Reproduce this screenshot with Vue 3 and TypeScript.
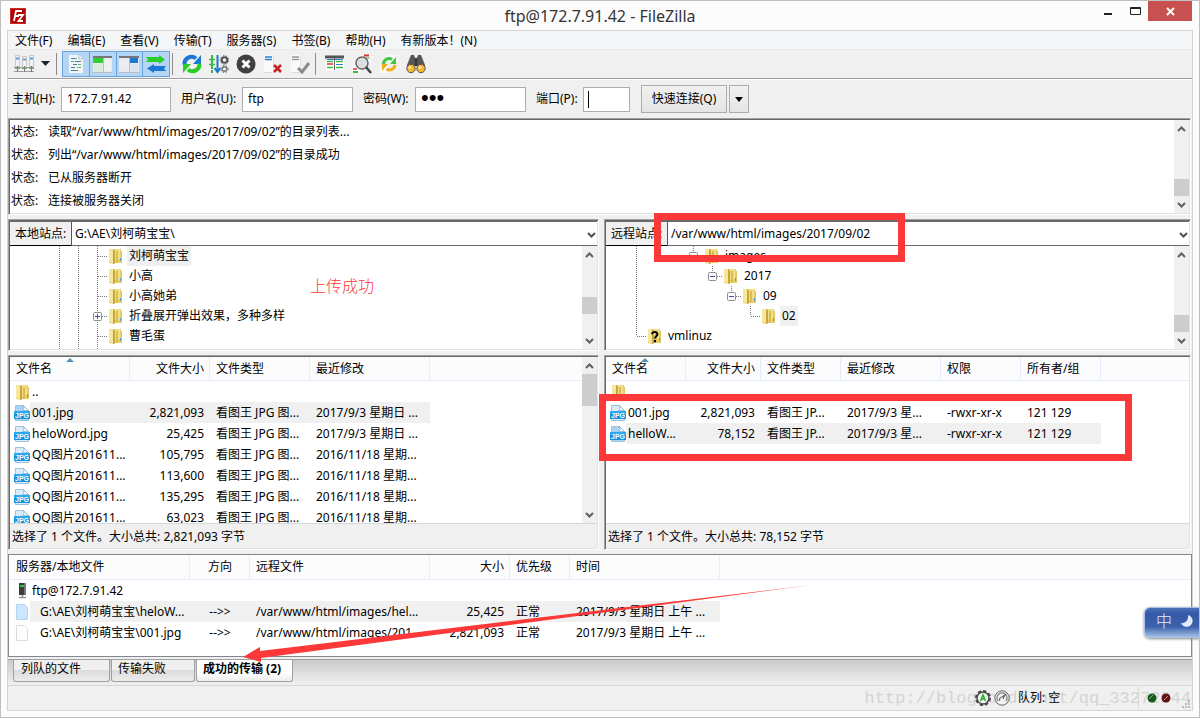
<script setup lang="ts">
import { defineComponent, h, ref } from 'vue'

type Cell = 'blank' | 'line' | 'tee' | 'plus' | 'minus' | 'elbow'
interface TreeNode { cells: Cell[]; label: string; selected?: boolean; unknown?: boolean }
interface FileRow { name: string; cols: string[]; selected?: boolean }

const menus = ['文件(F)', '编辑(E)', '查看(V)', '传输(T)', '服务器(S)', '书签(B)', '帮助(H)', '有新版本！(N)']

const log = [
  '读取“/var/www/html/images/2017/09/02”的目录列表...',
  '列出“/var/www/html/images/2017/09/02”的目录成功',
  '已从服务器断开',
  '连接被服务器关闭',
]

const localTree: TreeNode[] = [
  { cells: ['line', 'line', 'tee'], label: '刘柯萌宝宝', selected: true },
  { cells: ['line', 'line', 'tee'], label: '小高' },
  { cells: ['line', 'line', 'tee'], label: '小高她弟' },
  { cells: ['line', 'line', 'plus'], label: '折叠展开弹出效果，多种多样' },
  { cells: ['line', 'line', 'tee'], label: '曹毛蛋' },
  { cells: ['line', 'line', 'tee'], label: '' },
]
const remoteTree: TreeNode[] = [
  { cells: ['line', 'blank', 'blank', 'minus'], label: 'images' },
  { cells: ['line', 'blank', 'blank', 'blank', 'minus'], label: '2017' },
  { cells: ['line', 'blank', 'blank', 'blank', 'blank', 'minus'], label: '09' },
  { cells: ['line', 'blank', 'blank', 'blank', 'blank', 'blank', 'elbow'], label: '02', selected: true },
  { cells: ['elbow'], label: 'vmlinuz', unknown: true },
]

const localFiles: FileRow[] = [
  { name: '001.jpg', cols: ['2,821,093', '看图王 JPG 图...', '2017/9/3 星期日 ...'], selected: true },
  { name: 'heloWord.jpg', cols: ['25,425', '看图王 JPG 图...', '2017/9/3 星期日 ...'] },
  { name: 'QQ图片201611...', cols: ['105,795', '看图王 JPG 图...', '2016/11/18 星期...'] },
  { name: 'QQ图片201611...', cols: ['113,600', '看图王 JPG 图...', '2016/11/18 星期...'] },
  { name: 'QQ图片201611...', cols: ['135,295', '看图王 JPG 图...', '2016/11/18 星期...'] },
  { name: 'QQ图片201611...', cols: ['63,023', '看图王 JPG 图...', '2016/11/18 星期...'] },
]
const remoteFiles: FileRow[] = [
  { name: '001.jpg', cols: ['2,821,093', '看图王 JP...', '2017/9/3 星...', '-rwxr-xr-x', '121 129'] },
  { name: 'helloW...', cols: ['78,152', '看图王 JP...', '2017/9/3 星...', '-rwxr-xr-x', '121 129'], selected: true },
]
const queueRows = [
  { name: 'G:\\AE\\刘柯萌宝宝\\heloW...', dir: '-->>', remote: '/var/www/html/images/hel...', size: '25,425', pri: '正常', time: '2017/9/3 星期日 上午 ...', selected: true },
  { name: 'G:\\AE\\刘柯萌宝宝\\001.jpg', dir: '-->>', remote: '/var/www/html/images/201...', size: '2,821,093', pri: '正常', time: '2017/9/3 星期日 上午 ...', selected: false },
]

const host = ref('172.7.91.42')
const user = ref('ftp')
const pass = ref('abc')
const port = ref('')

const FolderIcon = defineComponent({
  props: { unknown: Boolean },
  setup: (props) => () =>
    h('svg', { width: 16, height: 16, viewBox: '0 0 16 16', style: { flex: 'none' } }, [
      h('path', { d: 'M2 1h12v14h-6l-1 1-5-1z', fill: '#e8cf6a' }),
      h('path', { d: 'M2 1h4v14l-4-1z', fill: '#f5e79c' }),
      h('path', { d: 'M6 1l2 2v12l-2 1z', fill: '#c9a43c' }),
      h('path', { d: 'M8 1h5v10l-5 1z', fill: '#f2df8c' }),
      h('path', { d: 'M9 3l2 0v11l-2 1z', fill: '#dcbc50' }),
      h('path', { d: 'M14 3l1 0v12l-1 0z', fill: '#dfc566' }),
      h('path', { d: 'M13 10h1v3h-1z', fill: '#4aa3d8' }),
      props.unknown
        ? h('path', { d: 'M6 6.2C6 3.2 11.6 3.2 11.4 6.4c0 1.8-2.4 2-2.4 4M9 12v2.2', fill: 'none', stroke: '#000', 'stroke-width': 2 })
        : null,
    ]),
})

const JpgIcon = defineComponent({
  props: { selected: Boolean },
  setup: (props) => () =>
    h('svg', { width: 16, height: 16, viewBox: '0 0 16 16', style: { flex: 'none' } }, [
      h('path', { d: 'M1.5 .5h8l5 5v10h-13z', fill: props.selected ? '#a9d2f3' : '#dcebf6', stroke: '#9cc3de' }),
      h('path', { d: 'M9.5 .5c1 2 0 4-1 5l6 0z', fill: '#f7fbff', stroke: '#6aaedb', 'stroke-width': 0.7 }),
      h('rect', { x: 0, y: 6, width: 16, height: 8, fill: '#1493e0' }),
      h('rect', { x: 0, y: 6, width: 16, height: 3, fill: '#2ea7ee' }),
      h('text', { x: 8, y: 12.8, 'text-anchor': 'middle', 'font-size': 7, 'font-weight': 700, 'font-family': 'Liberation Sans, sans-serif', fill: '#fff' }, 'JPG'),
    ]),
})

const TreeCell = defineComponent({
  props: { kind: { type: String, required: true } },
  setup: (props) => () => {
    const dots = { stroke: '#777', 'stroke-dasharray': '1 1', 'stroke-width': 1 }
    const k = props.kind
    const parts = []
    if (k === 'line' || k === 'tee' || k === 'plus') parts.push(h('path', { d: 'M9.5 0v20', ...dots }))
    if (k === 'elbow' || k === 'minus') parts.push(h('path', { d: 'M9.5 0v10', ...dots }))
    if (k === 'tee' || k === 'elbow' || k === 'plus' || k === 'minus') parts.push(h('path', { d: 'M10 10.5h10', ...dots }))
    if (k === 'plus' || k === 'minus') {
      parts.push(h('rect', { x: 5.5, y: 6.5, width: 8, height: 8, rx: 1, fill: '#fafafa', stroke: '#8e8e8e' }))
      parts.push(h('path', { d: k === 'plus' ? 'M7 10.5h5M9.5 8v5' : 'M7 10.5h5', stroke: '#3c5aa0' }))
    }
    return h('svg', { width: 19, height: 20, viewBox: '0 0 19 20', fill: 'none', style: { flex: 'none' } }, parts)
  },
})

const ScrollBar = defineComponent({
  props: { before: { type: Number, required: true }, thumb: { type: Number, required: true } },
  setup: (props) => () => {
    const arrow = (d: string) =>
      h('svg', { width: 15, height: 17, viewBox: '0 0 15 17', fill: 'none', style: { flex: 'none' } }, [
        h('path', { d, stroke: '#606060', 'stroke-width': 2 }),
      ])
    return h('div', { class: 'scrollbar' }, [
      arrow('M4 11l3.5-3.5L11 11'),
      h('div', { style: { flex: `${props.before} 1 0` } }),
      h('div', { class: 'thumb', style: { height: `${props.thumb}px` } }),
      h('div', { style: { flex: `${100 - props.before} 1 0` } }),
      arrow('M4 7l3.5 3.5L11 7'),
    ])
  },
})
</script>

<template>
  <div class="window">
    <header class="titlebar">
      <svg class="logo" width="16" height="16" viewBox="0 0 16 16">
        <rect width="16" height="16" fill="#b30000" />
        <rect x=".5" y=".5" width="15" height="15" fill="none" stroke="#d25a5a" stroke-dasharray="1 1" />
        <path d="M4 13L6 3h6M5 8h4M8 7h5l-4.500 6H13" fill="none" stroke="#fff" stroke-width="1.800" />
      </svg>
      <h1>ftp@172.7.91.42 - FileZilla</h1>
      <div class="winbtns">
        <button aria-label="最小化"><svg width="26" height="20"><path d="M12 13h8" stroke="#222" stroke-width="2" /></svg></button>
        <button aria-label="最大化"><svg width="30" height="20"><path d="M12.500 6.500h10v7h-10zM12 7.500h11" fill="none" stroke="#222" /></svg></button>
        <button class="close" aria-label="关闭"><svg width="44" height="20"><path d="M19 7l7 7M26 7l-7 7" stroke="#fff" stroke-width="2" /></svg></button>
      </div>
    </header>

    <div class="client">
      <nav class="menubar">
        <button v-for="m in menus" :key="m">{{ m }}</button>
      </nav>

      <div class="toolbar">
        <button class="tool site" aria-label="站点管理器">
          <svg width="22" height="22" viewBox="0 0 22 22">
            <g fill="#f4f4f4" stroke="#c9c9c9"><rect x="2.500" y="2.500" width="4" height="11" /><rect x="9.500" y="3.500" width="4" height="11" /><rect x="16.500" y="2.500" width="4" height="11" /></g>
            <path d="M3 5.500h3M10 6.500h3M17 5.500h3" stroke="#5c9ad6" stroke-width="2" />
            <path d="M1 14.500h20M1 18.500h20" stroke="#9c9c9c" />
            <path d="M4.500 13v6M11.500 13v6M18.500 13v6" stroke="#777" />
            <path d="M2 15.500h5M9 15.500h5M16 15.500h5" stroke="#69a869" />
          </svg>
        </button>
        <button class="tool drop" aria-label="站点列表"><svg width="9" height="5"><path d="M0 0h9L4.500 5z" fill="#222" /></svg></button>
        <span class="sep"></span>
        <div class="toggles">
          <button class="toggle" aria-label="消息日志">
            <svg width="20" height="20" viewBox="0 0 20 20"><path d="M3 1h10l4 4v14H3z" fill="#f3f6f8" /><path d="M13 1v4h4" fill="none" stroke="#b9c4cc" /><path d="M5 4.500h5M7 10.500h4M5 13.500h4" stroke="#4b7a99" /><path d="M5 7.500h3M11 13.500h4M9 4.500h2" stroke="#58b858" /><path d="M9 7.500h6M5 16.500h7" stroke="#4b7a99" /><path d="M12 10.500h3" stroke="#58b858" /></svg>
          </button>
          <button class="toggle" aria-label="本地目录树">
            <svg width="20" height="20" viewBox="0 0 20 20"><path d="M0 2h19v16H0z" fill="#e6e9ec" /><path d="M0 2h19v2H0z" fill="#777" /><path d="M0 4h10v5H0z" fill="#2fd02f" /><path d="M1 10h8v7H1z" fill="#d8ebd6" /><path d="M11 5h7v12h-7z" fill="#f1f1f1" /><path d="M10.500 4v14M0 18.500h19" stroke="#b9c0c6" /></svg>
          </button>
          <button class="toggle" aria-label="远程目录树">
            <svg width="20" height="20" viewBox="0 0 20 20"><path d="M0 2h20v16H0z" fill="#e6e9ec" /><path d="M0 2h20v2H0z" fill="#777" /><path d="M1 5h9v12H1z" fill="#ececec" /><path d="M11 4h8v5h-8z" fill="#1b78d4" /><path d="M12 10h7v7h-7z" fill="#d6e4f2" /><path d="M10.500 4v14M0 18.500h20" stroke="#b9c0c6" /></svg>
          </button>
          <button class="toggle" aria-label="传输队列">
            <svg width="20" height="20" viewBox="0 0 20 20"><path d="M0 3h13V1l6 4.500-6 4.500V8H0l2-2.500z" fill="#27cf27" /><path d="M20 12H8v-2l-7 4.500L8 19v-2h12l-2-2.500z" fill="#1b78d4" /></svg>
          </button>
        </div>
        <span class="sep tight"></span>
        <button class="tool" aria-label="刷新">
          <svg width="20" height="20" viewBox="0 0 20 20"><path d="M2.500 10.500A7 7 0 0 1 14 4.500" fill="none" stroke="#1b78d4" stroke-width="4" /><path d="M19 1v9h-8z" fill="#1b78d4" /><path d="M17.500 9.500A7 7 0 0 1 6 15.500" fill="none" stroke="#27cf27" stroke-width="4" /><path d="M1 19v-9h8z" fill="#27cf27" /></svg>
        </button>
        <button class="tool" aria-label="处理队列">
          <svg width="20" height="20" viewBox="0 0 20 20"><path d="M3 1v18" stroke="#3db93d" stroke-width="2" stroke-dasharray="4 1" /><path d="M0 5.500h6M0 10.500h6" stroke="#3db93d" stroke-width="1.500" /><path d="M8.500 1v17M5.500 14l3 4 3-4" fill="none" stroke="#1b78d4" stroke-width="2" /><circle cx="15.500" cy="6" r="2.800" fill="none" stroke="#555" stroke-width="2" /><circle cx="15.500" cy="6" r="4.300" fill="none" stroke="#555" stroke-width="1" stroke-dasharray="1.500 1.500" /><circle cx="15.500" cy="15" r="2.300" fill="none" stroke="#777" stroke-width="1.500" /><circle cx="15.500" cy="15" r="3.700" fill="none" stroke="#777" stroke-width="1" stroke-dasharray="1.500 1.500" /></svg>
        </button>
        <button class="tool" aria-label="取消">
          <svg width="20" height="20" viewBox="0 0 20 20"><circle cx="10" cy="10" r="9.500" fill="#404040" /><path d="M6.500 6.500l7 7M13.500 6.500l-7 7" stroke="#fff" stroke-width="3" /></svg>
        </button>
        <button class="tool" aria-label="断开">
          <svg width="20" height="20" viewBox="0 0 20 20"><path d="M1 1h9v17H1z" fill="#fafafa" /><path d="M2 3h7M2 5.500h7" stroke="#2a7fd0" stroke-width="1.500" /><path d="M10.500 1v17M1 18.500h9" stroke="#ddd" /><path d="M11 11l7 7M18 11l-7 7" stroke="#c62222" stroke-width="2.500" /></svg>
        </button>
        <button class="tool" aria-label="重新连接">
          <svg width="20" height="20" viewBox="0 0 20 20"><path d="M1 1h9v17H1z" fill="#fafafa" /><path d="M2 3h7M2 5.500h7" stroke="#999" stroke-width="1.500" /><path d="M10.500 1v17M1 18.500h9" stroke="#ddd" /><path d="M8 14l4 4 7-9" fill="none" stroke="#8a8a8a" stroke-width="3" /></svg>
        </button>
        <span class="sep tight"></span>
        <button class="tool" aria-label="过滤">
          <svg width="20" height="20" viewBox="0 0 20 20"><path d="M1 2h18v15H1z" fill="#fff" /><path d="M0 3h19" stroke="#555" stroke-width="3" /><path d="M2 7.500h6M11 7.500h7M2 13.500h6M11 13.500h7" stroke="#3dbb3d" stroke-width="1.500" /><path d="M2 10h6" stroke="#d33" stroke-width="1.500" /><path d="M11 10.500h7M2 5.500h16" stroke="#2a7fd0" /><path d="M9.500 4v12" stroke="#666" /></svg>
        </button>
        <button class="tool" aria-label="搜索比较">
          <svg width="20" height="20" viewBox="0 0 20 20"><path d="M9 1h10v8H9zM1 11h8v8H1z" fill="#fafafa" /><path d="M12 1.500h5" stroke="#d33" stroke-width="2" /><path d="M14 4h4" stroke="#3dbb3d" /><circle cx="10" cy="9" r="6" fill="#d9dee1" stroke="#666" stroke-width="1.500" /><path d="M14 13l5 6" stroke="#444" stroke-width="2.500" /><path d="M1 15h4" stroke="#d33" stroke-width="1.500" /><path d="M1 18h5" stroke="#3dbb3d" stroke-width="2" /></svg>
        </button>
        <button class="tool" aria-label="同步浏览">
          <svg width="20" height="20" viewBox="0 0 20 20"><path d="M9 1h10v7H9zM1 12h8v7H1z" fill="#fafafa" /><path d="M4.500 10A5.500 5.500 0 0 1 13 5.500" fill="none" stroke="#3cc93c" stroke-width="3" /><path d="M17 3v7h-6z" fill="#3cc93c" /><path d="M16 11a5.500 5.500 0 0 1-8.500 4" fill="none" stroke="#f0ae1c" stroke-width="3" /><path d="M3 17v-7h6z" fill="#f0ae1c" /></svg>
        </button>
        <button class="tool" aria-label="查找">
          <svg width="20" height="20" viewBox="0 0 20 20"><path d="M5 1h3l1.500 4h1L12 1h3l4 10v5h-8v-5H9v5H1v-5z" fill="#555" /><path d="M9 4h2v8H9z" fill="#333" /><circle cx="5" cy="14.500" r="4.200" fill="#f7b731" stroke="#555" /><circle cx="15" cy="14.500" r="4.200" fill="#f7b731" stroke="#555" /><circle cx="4" cy="13.500" r="1.500" fill="#ffe9a0" /><circle cx="14" cy="13.500" r="1.500" fill="#ffe9a0" /></svg>
        </button>
      </div>

      <form class="quick" @submit.prevent>
        <label for="host">主机(H):</label><input id="host" v-model="host" type="text" />
        <label for="user">用户名(U):</label><input id="user" v-model="user" type="text" />
        <label for="pass">密码(W):</label><input id="pass" v-model="pass" class="pw" type="password" autocomplete="off" />
        <label for="port">端口(P):</label>
        <span class="portbox"><input id="port" v-model="port" type="text" /><i class="caret"></i></span>
        <button class="connect" type="submit">快速连接(Q)</button>
        <button class="recent" type="button" aria-label="历史"><svg width="8" height="5"><path d="M0 0h8L4 5z" fill="#000" /></svg></button>
      </form>

      <section class="panel log">
        <div class="fill">
          <div v-for="(line, i) in log" :key="i" class="logrow"><span>状态:</span><span>{{ line }}</span></div>
        </div>
        <ScrollBar :before="100" :thumb="17" />
      </section>

      <div class="split trees">
        <section class="panel col left">
          <div class="sitebar">
            <label for="lsite">本地站点:</label>
            <select id="lsite"><option>G:\AE\刘柯萌宝宝\</option></select>
            <svg class="chev" width="9" height="7"><path d="M1 1l3.500 3.500L8 1" fill="none" stroke="#505050" stroke-width="2" /></svg>
          </div>
          <div class="body">
            <div class="fill tree ltree">
              <div v-for="(n, i) in localTree" :key="i" class="node">
                <TreeCell v-for="(c, j) in n.cells" :key="j" :kind="c" />
                <FolderIcon />
                <span class="nlabel" :class="{ sel: n.selected }">{{ n.label }}</span>
              </div>
            </div>
            <ScrollBar :before="65" :thumb="17" />
          </div>
        </section>
        <section class="panel col right">
          <div class="sitebar">
            <label for="rsite">远程站点:</label>
            <select id="rsite"><option>/var/www/html/images/2017/09/02</option></select>
            <svg class="chev" width="9" height="7"><path d="M1 1l3.500 3.500L8 1" fill="none" stroke="#505050" stroke-width="2" /></svg>
          </div>
          <div class="body">
            <div class="fill tree rtree">
              <div v-for="(n, i) in remoteTree" :key="i" class="node">
                <TreeCell v-for="(c, j) in n.cells" :key="j" :kind="c" />
                <FolderIcon :unknown="n.unknown" />
                <span class="nlabel" :class="{ sel: n.selected }">{{ n.label }}</span>
              </div>
            </div>
            <ScrollBar :before="100" :thumb="17" />
          </div>
        </section>
      </div>

      <div class="split files">
        <section class="panel col left">
          <div class="body">
            <div class="fill">
              <table>
                <colgroup><col class="c120" /><col class="c80" /><col class="c100" /><col class="c120" /><col /></colgroup>
                <thead><tr><th class="sorted">文件名<i></i></th><th class="num">文件大小</th><th>文件类型</th><th>最近修改</th><th class="rest"></th></tr></thead>
                <tbody>
                  <tr><td class="name"><div><FolderIcon /><span>..</span></div></td><td></td><td></td><td></td><td></td></tr>
                  <tr v-for="(f, i) in localFiles" :key="i" :class="{ selrow: f.selected }">
                    <td class="name"><div><JpgIcon :selected="f.selected" /><span>{{ f.name }}</span></div></td>
                    <td v-for="(c, j) in f.cols" :key="j" :class="{ num: j === 0 }">{{ c }}</td>
                    <td class="rest"></td>
                  </tr>
                </tbody>
              </table>
            </div>
            <ScrollBar :before="0" :thumb="32" />
          </div>
          <footer>选择了 1 个文件。大小总共: 2,821,093 字节</footer>
        </section>
        <section class="panel col right">
          <div class="body">
            <div class="fill">
              <table>
                <colgroup><col class="c80" /><col class="c75" /><col class="c80" /><col class="c100" /><col class="c80" /><col class="c80" /><col /></colgroup>
                <thead><tr><th class="sorted">文件名<i></i></th><th class="num">文件大小</th><th>文件类型</th><th>最近修改</th><th>权限</th><th>所有者/组</th><th class="rest"></th></tr></thead>
                <tbody>
                  <tr><td class="name"><div><FolderIcon /><span>..</span></div></td><td></td><td></td><td></td><td></td><td></td><td></td></tr>
                  <tr v-for="(f, i) in remoteFiles" :key="i" :class="{ selrow: f.selected }">
                    <td class="name"><div><JpgIcon :selected="f.selected" /><span>{{ f.name }}</span></div></td>
                    <td v-for="(c, j) in f.cols" :key="j" :class="{ num: j === 0 }">{{ c }}</td>
                    <td class="rest"></td>
                  </tr>
                </tbody>
              </table>
            </div>
          </div>
          <footer>选择了 1 个文件。大小总共: 78,152 字节</footer>
        </section>
      </div>

      <section class="queue">
        <table>
          <colgroup><col class="c180" /><col class="c60" /><col class="c180" /><col class="c80" /><col class="c60" /><col class="c150" /><col /></colgroup>
          <thead><tr><th>服务器/本地文件</th><th class="mid">方向</th><th>远程文件</th><th class="num">大小</th><th>优先级</th><th>时间</th><th class="rest"></th></tr></thead>
          <tbody>
            <tr>
              <td class="name" colspan="2">
                <div>
                  <svg class="ico" width="16" height="16" viewBox="0 0 16 16"><rect x="5" y="0" width="7" height="12" fill="#3c3c3c" /><rect x="10" y="0" width="2" height="12" fill="#777" /><rect x="6" y="2" width="4" height="2" fill="#35c435" /><path d="M8.500 12v3M5 14.500h7" stroke="#8a98a4" stroke-width="1.500" /></svg>
                  <span>ftp@172.7.91.42</span>
                </div>
              </td>
              <td></td><td></td><td></td><td></td><td></td>
            </tr>
            <tr v-for="(q, i) in queueRows" :key="i" :class="{ selrow: q.selected }">
              <td class="name">
                <div>
                  <svg class="ico" width="16" height="16" viewBox="0 0 16 16"><path d="M2.500 .5h8l3 3v12h-11z" :fill="q.selected ? '#cce6ff' : '#fdfdfd'" :stroke="q.selected ? '#b4d6f5' : '#dcdcdc'" /></svg>
                  <span class="indent">{{ q.name }}</span>
                </div>
              </td>
              <td class="mid">{{ q.dir }}</td><td>{{ q.remote }}</td><td class="num">{{ q.size }}</td><td>{{ q.pri }}</td><td>{{ q.time }}</td><td class="rest"></td>
            </tr>
          </tbody>
        </table>
      </section>

      <div class="tabs">
        <button class="t1">列队的文件</button><button class="t2">传输失败</button><button class="t3 active">成功的传输 (2)</button>
      </div>

      <div class="status">
        <span class="watermark">http://blog.csdn.net/qq_33272844</span>
        <svg width="16" height="16" viewBox="0 0 16 16"><circle cx="8" cy="8" r="6.500" fill="none" stroke="#4a4a4a" stroke-width="3" stroke-dasharray="3 2" /><circle cx="8" cy="8" r="6" fill="#f2f2f2" stroke="#4a4a4a" stroke-width="1.500" /><path d="M5.500 11L8 5l2.500 6M6.500 9h3" fill="none" stroke="#21b321" stroke-width="1.500" /></svg>
        <svg width="16" height="16" viewBox="0 0 16 16"><circle cx="8" cy="8" r="7.200" fill="#f4f4f4" stroke="#666" /><path d="M4 11a5 5 0 1 1 8 0" fill="none" stroke="#888" stroke-width="1.500" /><path d="M6 11a2.500 2.500 0 0 1 2-4l3-2-2 4" fill="none" stroke="#666" stroke-width="1.200" /></svg>
        <span class="qtext">队列: 空</span>
        <i class="vline"></i>
        <svg width="24" height="10" viewBox="0 0 24 10"><circle cx="5" cy="5" r="4.500" fill="#1d5a1d" /><path d="M2 6l4-4" stroke="#7fae7f" /><circle cx="19" cy="5" r="4.500" fill="#641414" /><path d="M17 7l4-4" stroke="#b98a8a" /></svg>
        <svg class="grip" width="8" height="8" viewBox="0 0 8 8"><path d="M6 0h2v2H6zM3 3h2v2H3zM6 3h2v2H6zM0 6h2v2H0zM3 6h2v2H3zM6 6h2v2H6z" fill="#bbb" /></svg>
      </div>
    </div>

    <div class="mark m1"></div>
    <div class="mark m2"></div>
    <div class="note">上传成功</div>
    <svg class="arrow" width="570" height="80" viewBox="0 0 570 80"><path d="M0 73l17-10v4L569 1 18 74v4z" fill="#fd3838" /></svg>
    <div class="ime">
      <span>中</span>
      <svg width="14" height="14" viewBox="0 0 14 14"><path d="M8 1a6 6 0 1 1-7 8c4 1 8-3 7-8z" fill="#e4ecfb" /></svg>
    </div>
  </div>
</template>

<style>
body { margin: 0; }
.scrollbar { flex: none; width: 15px; display: flex; flex-direction: column; background: #f0f0f0; }
.scrollbar .thumb { flex: none; background: #cdcdcd; }
</style>

<style scoped>
* { box-sizing: border-box; }
.window {
  position: relative; height: 100vh; min-height: 560px; overflow: hidden; display: flex; flex-direction: column;
  border: 1px solid #c0c0c0; background: #fcfcfc; padding: 0 6px 6px;
  font: 12px/20px "Noto Sans", "Noto Sans CJK SC", sans-serif; color: #000;
}
button, input, select { font: inherit; color: inherit; margin: 0; padding: 0; border: 0; background: none; border-radius: 0; outline: 0; }
svg { flex: none; display: block; }
.titlebar { position: relative; height: 29px; flex: none; display: flex; align-items: center; }
.logo { margin-left: 3px; }
h1 { flex: 1; margin: 0; text-align: center; font-size: 16px; font-weight: 400; color: #333; padding-left: 82px; }
.winbtns { display: flex; align-self: flex-start; margin-right: 1px; }
.winbtns .close { background: #c75050; }
.client { flex: 1; min-height: 0; display: flex; flex-direction: column; background: #f0f0f0; border: 1px solid #d4d4d4; }
.menubar { flex: none; display: flex; gap: 15px; padding-left: 7px; height: 19px; background: #f5f6f7; border-bottom: 1px solid #e8e8e8; }
.menubar button { line-height: 20px; white-space: nowrap; }
.toolbar { flex: none; height: 30px; display: flex; align-items: center; border-bottom: 1px solid #fff; box-shadow: inset 0 -1px #a0a0a0; padding: 0 0 2px 4px; }
.tool { width: 27px; height: 24px; display: grid; place-items: center; }
.tool.site { width: 24px; }
.tool.drop { width: 18px; }
.sep { width: 1px; height: 22px; background: #8c8c8c; margin: 0 5px 0 2px; }
.sep.tight { margin: 0 5px 0 2px; }
.toggles { width: 108px; display: flex; border: 1px solid #66a3e0; background: #b5d5f4; }
.toggle { flex: 1; min-width: 0; height: 24px; display: grid; place-items: center; border-right: 1px solid #66a3e0; }
.toggle:last-child { border-right: 0; }
.quick { flex: none; height: 38px; padding-left: 4px; display: grid; grid-template-columns: 49px 110px 71px 111px 62px 111px 57px 47px 97px 22px; align-items: center; }
.quick label { white-space: nowrap; padding-left: 10px; }
.quick label:first-child { padding-left: 0; }
.quick input { height: 25px; min-width: 0; width: 100%; border: 1px solid #abadb3; background: #fff; padding: 0 5px 2px; display: block; }
.quick .pw { font-size: 22px; font-family: "Liberation Sans", sans-serif; }
.portbox { position: relative; }
.caret { position: absolute; left: 5px; top: 4px; width: 1px; height: 17px; background: #000; }
.quick button { border: 1px solid #acacac; background: linear-gradient(#f0f0f0, #e5e5e5); height: 28px; }
.connect { margin-left: 11px; }
.recent { margin-left: 2px; display: grid; place-items: center; }
.panel { display: flex; min-width: 0; min-height: 0; background: #fff; border: 1px solid; border-color: #a0a0a0 #fff #fff #a0a0a0; box-shadow: inset 1px 1px #696969, inset -1px -1px #e3e3e3; padding: 1px; }
.col { flex-direction: column; }
.log { flex: 93 1 0; margin-right: 1px; }
.fill { flex: 1; min-width: 0; overflow: hidden; }
.logrow { display: flex; line-height: 23px; padding-left: 1px; white-space: nowrap; }
.logrow span:first-child { width: 37px; }
.split { display: flex; gap: 5px; margin: 4px 1px 0 0; min-height: 0; }
.trees { flex: 132 1 0; }
.files { flex: 195 1 0; }
.left { flex: 591 1 0; }
.right { flex: 587 1 0; }
.sitebar { position: relative; flex: none; height: 25px; display: flex; border-top: 1px solid #696969; }
.sitebar label { width: 61px; padding-left: 5px; background: #f0f0f0; border-bottom: 1px solid #000; line-height: 23px; white-space: nowrap; }
.sitebar select { flex: 1; min-width: 0; appearance: none; background: #fff; border-left: 1px solid #555; border-bottom: 1px solid #696969; padding-left: 3px; line-height: 23px; }
.chev { position: absolute; right: 1px; top: 10px; pointer-events: none; }
.body { flex: 1; min-height: 0; display: flex; }
.ltree { padding-left: 40px; }
.rtree { padding-left: 21px; }
.node { display: flex; align-items: center; height: 20px; white-space: nowrap; }
.nlabel { margin-left: 4px; padding: 0 2px; }
.sel { background: #f0f0f0; }
table { width: 100%; table-layout: fixed; border-collapse: separate; border-spacing: 0; }
.c60 { width: 60px; } .c75 { width: 75px; } .c80 { width: 80px; } .c100 { width: 100px; }
.c120 { width: 120px; } .c150 { width: 150px; } .c180 { width: 180px; }
th { position: relative; height: 24px; padding: 0 5px 0 6px; font-weight: 400; text-align: left; background: #fcfcfc; border-right: 1px solid #e3eefb; border-bottom: 1px solid #e3eefb; white-space: nowrap; line-height: 22px; }
th.rest { border-right: 0; }
.queue th { height: 25px; }
td { height: 21px; padding: 0 6px; line-height: 21px; white-space: nowrap; overflow: hidden; }
.num { text-align: right; }
.mid { text-align: center; }
.sorted i { position: absolute; left: 50%; top: 1px; margin-left: -4px; border: 4px solid transparent; border-top: 0; border-bottom-color: #4f93b8; }
td.name { padding: 0; }
.name div { display: flex; align-items: center; padding-left: 4px; }
.name div span { flex: 1; padding-left: 2px; }
.name div span.indent { padding-left: 10px; }
.selrow td:not(.name):not(.rest), .selrow .name span { background: #f0f0f0; }
footer { flex: none; height: 25px; padding-left: 2px; background: #f0f0f0; border-top: 1px solid #d7d7d7; line-height: 25px; white-space: nowrap; overflow: hidden; }
.queue { flex: 101 1 0; min-height: 0; margin-top: 4px; overflow: hidden; background: #fff; border: 1px solid #828790; padding-left: 1px; }
.tabs { flex: none; height: 26px; margin-top: 2px; padding-left: 5px; display: flex; align-items: flex-start; gap: 1px; background: linear-gradient(#cbcbcb, #f0f0f0); border-top: 1px solid #a0a0a0; }
.tabs button { height: 22px; line-height: 18px; padding-bottom: 3px; border: 1px solid #a0a0a0; border-top: 0; border-radius: 0 0 3px 3px; background: linear-gradient(#f0f0f0 50%, #dcdcdc 50%, #ececec); text-align: left; padding-left: 7px; white-space: nowrap; }
.t1 { width: 97px; }
.tabs .t2 { width: 84px; padding-left: 6px; }
.tabs .t3 { width: 97px; background: linear-gradient(#fff 60%, #ededed); font-weight: 700; padding-left: 6px; }
.status { position: relative; flex: none; height: 25px; border-top: 1px solid #d7d7d7; display: flex; align-items: center; justify-content: flex-end; gap: 3px; padding-right: 2px; }
.watermark { position: absolute; right: 1px; top: 3px; font: 17px/20px "Liberation Mono", monospace; color: #d4d4d4; }
.status > svg, .qtext { position: relative; }
.qtext { width: 122px; padding-left: 5px; }
.vline { position: relative; width: 1px; height: 22px; background: #d7d7d7; margin-right: 5px; }
.grip { align-self: flex-end; margin: 0 0 2px 8px; }
.mark { position: absolute; border: 7px solid #fd3838; pointer-events: none; }
.m1 { left: 653px; top: 212px; width: 251px; height: 49px; }
.m2 { left: 598px; top: 393px; width: 533px; height: 67px; }
.note { position: absolute; left: 309px; top: 275px; font-size: 16px; font-weight: 300; color: #fd3838; }
.arrow { position: absolute; left: 242px; top: 583px; pointer-events: none; }
.ime { position: absolute; right: -1px; top: 606px; width: 56px; height: 31px; border: 1px solid #a8c0e4; border-right: 0; border-radius: 6px 0 0 6px; background: linear-gradient(#4a72b8, #3559a6 20%, #3c62ad 65%, #a4bfe6); box-shadow: 0 1px 3px #888; display: flex; align-items: center; gap: 8px; padding: 0 0 4px 11px; color: #e4ecfb; font-size: 16px; font-weight: 300; }
</style>
